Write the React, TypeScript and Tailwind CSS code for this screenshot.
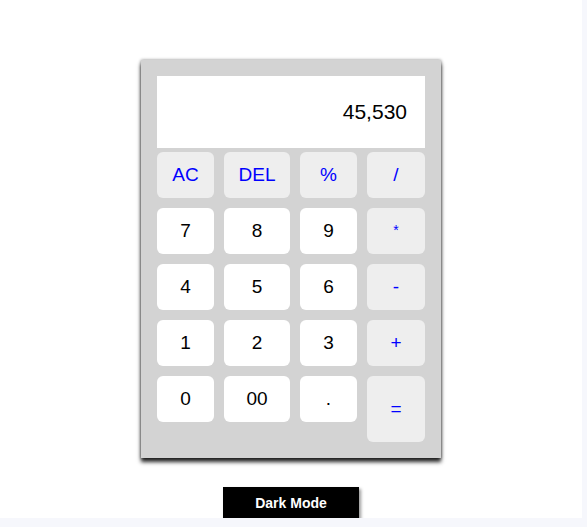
import React, { useState } from 'react';

const keys = [
  { label: 'AC', op: true },
  { label: 'DEL', op: true },
  { label: '%', op: true },
  { label: '/', op: true },
  { label: '7' },
  { label: '8' },
  { label: '9' },
  { label: '*', op: true, small: true },
  { label: '4' },
  { label: '5' },
  { label: '6' },
  { label: '-', op: true },
  { label: '1' },
  { label: '2' },
  { label: '3' },
  { label: '+', op: true },
  { label: '0' },
  { label: '00' },
  { label: '.' },
  { label: '=', op: true, tall: true },
];

const App: React.FC = () => {
  const [value] = useState('45,530');

  return (
    <div className="w-[587px] h-[527px] bg-[#f6f7fc] overflow-hidden font-['Liberation_Sans',Arial,sans-serif]">
      <div className="w-[582px] h-[518px] bg-white flex flex-col items-center pt-[60px] overflow-hidden">
        {/* calculator */}
        <div className="w-[300px] bg-[#d3d3d3] p-4 shadow-[0_4px_4px_rgba(0,0,0,0.85),0_0_3px_rgba(0,0,0,0.45)]">
          <div className="h-[72px] bg-white flex items-center justify-end pr-[18px] text-[21px] text-black mb-1">
            {value}
          </div>
          <div className="grid grid-cols-[57px_66px_57px_58px] grid-rows-[46px_46px_46px_46px_66px] gap-x-[10px] gap-y-[10px] items-start">
            {keys.map((k) => (
              <button
                key={k.label}
                className={`rounded-md flex justify-center ${
                  k.op ? 'bg-[#eeeeee] text-[#0000ff]' : 'bg-white text-black'
                } ${k.tall ? 'h-[66px]' : 'h-[46px]'} ${k.small ? 'text-[14px] items-start pt-[12px]' : 'text-[19px] items-center'}`}
              >
                {k.label}
              </button>
            ))}
          </div>
        </div>

        <button className="mt-[29px] w-[136px] h-[32px] shrink-0 bg-black text-white text-[14px] font-bold shadow-[2px_2px_3px_rgba(0,0,0,0.4)]">
          Dark Mode
        </button>
      </div>
    </div>
  );
};

export default App;
